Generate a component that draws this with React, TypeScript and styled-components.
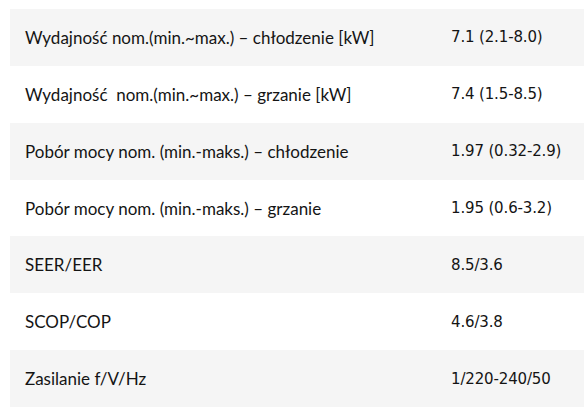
import * as React from 'react'
import styled, { createGlobalStyle } from 'styled-components'

const GlobalStyle = createGlobalStyle`
  html, body {
    margin: 0;
    padding: 0;
    background: #ffffff;
  }
`

const Page = styled.div`
  padding: 9px 0 0 10px;
`

const SpecTable = styled.div`
  display: flex;
  flex-direction: column;
  width: 100%;
`

const Row = styled.div<{ $shaded: boolean }>`
  display: grid;
  grid-template-columns: 426px 1fr;
  align-items: center;
  height: 56.86px;
  background: ${p => (p.$shaded ? '#f5f5f5' : '#ffffff')};
`

const Label = styled.div`
  padding: 0 15px;
  font-family: Lato, 'Noto Sans', sans-serif;
  font-size: 17px;
  color: #141414;
  white-space: pre;
`

const Value = styled.div`
  padding: 0 15px;
  font-family: 'DejaVu Sans', Verdana, sans-serif;
  font-size: 15px;
  letter-spacing: -0.15px;
  color: #141414;
`

const specs: [string, string][] = [
  ['Wydajność nom.(min.~max.) – chłodzenie [kW]', '7.1 (2.1-8.0)'],
  ['Wydajność  nom.(min.~max.) – grzanie [kW]', '7.4 (1.5-8.5)'],
  ['Pobór mocy nom. (min.-maks.) – chłodzenie', '1.97 (0.32-2.9)'],
  ['Pobór mocy nom. (min.-maks.) – grzanie', '1.95 (0.6-3.2)'],
  ['SEER/EER', '8.5/3.6'],
  ['SCOP/COP', '4.6/3.8'],
  ['Zasilanie f/V/Hz', '1/220-240/50'],
]

export default function App() {
  return (
    <Page>
      <GlobalStyle />
      <SpecTable>
        {specs.map(([label, value], i) => (
          <Row key={label} $shaded={i % 2 === 0}>
            <Label>{label}</Label>
            <Value>{value}</Value>
          </Row>
        ))}
      </SpecTable>
    </Page>
  )
}
